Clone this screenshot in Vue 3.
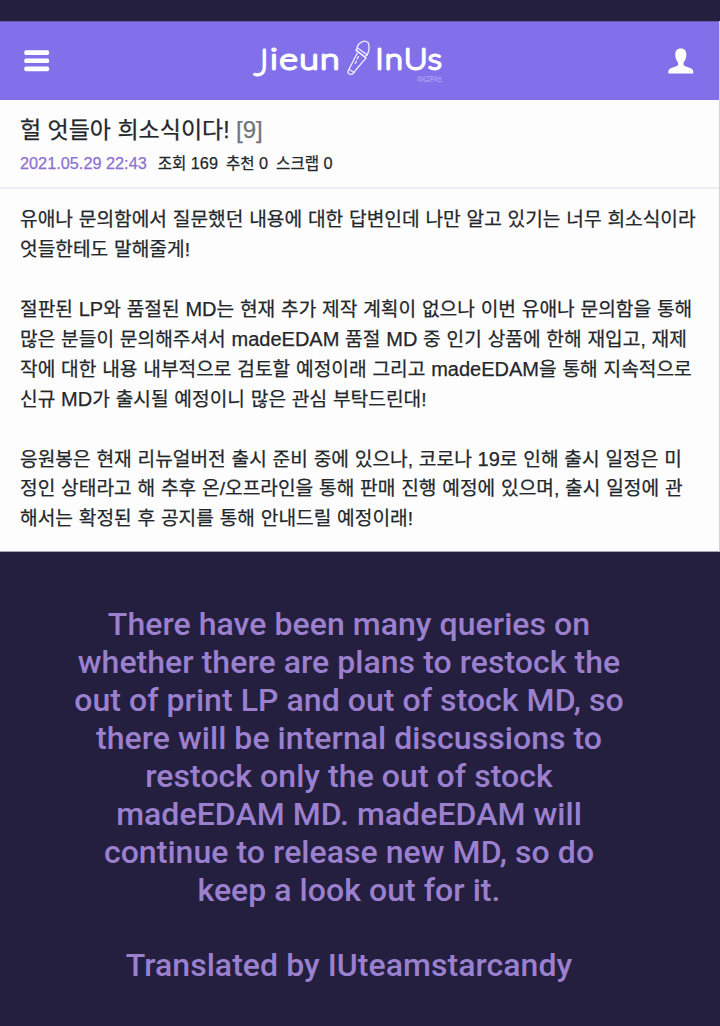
<template>
  <div class="page">
    <section class="post">
      <header class="topbar">
        <button class="icon-btn" aria-label="menu">
          <svg width="26" height="22" viewBox="0 0 26 22">
            <rect x="0.3" y="0.3" width="24.8" height="4.6" rx="1.6" />
            <rect x="0.3" y="8.4" width="24.8" height="4.6" rx="1.6" />
            <rect x="0.3" y="16.6" width="24.8" height="4.6" rx="1.6" />
          </svg>
        </button>
        <svg class="logo" width="200" height="50" viewBox="0 0 200 50">
          <text class="word initial" x="6" y="39">J</text>
          <text class="word" x="22.3" y="33" textLength="71" lengthAdjust="spacingAndGlyphs">ieun</text>
          <g class="mic">
            <path d="M109.2 17.2L100.2 34.7Q99.4 37 101.3 38Q103.7 39.2 105.2 37.2L117.8 22.2" />
            <path d="M108.5 14.5Q109.5 6.5 116 5.2Q121.7 5.1 121 11.5Q121.2 18 116.7 20.7Z" />
            <path d="M107.7 14.1L118 22.1M109.9 12.3L119.4 19M101.7 33.8L106.3 36.8" />
            <path d="M110.5 20.5L109.3 22.7M108.4 25.2L107.3 27.3" />
          </g>
          <text class="word" x="127.5" y="33" textLength="68" lengthAdjust="spacingAndGlyphs">InUs</text>
          <text class="sub" x="169" y="44.5" textLength="25" lengthAdjust="spacingAndGlyphs">이지금은어스</text>
        </svg>
        <button class="icon-btn" aria-label="profile">
          <svg width="26" height="26" viewBox="0 0 26 26">
            <path d="M12.8 0.5C16.7 0.5 18.6 3.1 18.3 7.2C18.1 10.2 17.2 12.6 15.6 14.2V17C16.5 19.2 24.8 19.2 25.2 23V25.5H0.4V23C0.8 19.2 9.1 19.2 10 17V14.2C8.4 12.6 7.5 10.2 7.3 7.2C7 3.1 8.9 0.5 12.8 0.5Z" />
          </svg>
        </button>
      </header>

      <div class="post-head">
        <h1>헐 엇들아 희소식이다! <span class="count">[9]</span></h1>
        <div class="meta">
          <span class="date">2021.05.29 22:43</span>
          <span v-for="item in stats" :key="item.label">{{ item.label }} <b>{{ item.value }}</b></span>
        </div>
      </div>

      <div class="post-body">
        <p v-for="(lines, i) in paragraphs" :key="i">
          <span v-for="(line, j) in lines" :key="j" class="line">
            <span v-for="(part, k) in splitLatin(line)" :key="k" :class="{ latin: k % 2 === 1 }">{{ part }}</span>
          </span>
        </p>
      </div>
    </section>

    <section class="translation">
      <p>
        <span v-for="line in translation" :key="line" class="line">{{ line }}</span>
      </p>
      <p>Translated by IUteamstarcandy</p>
    </section>
  </div>
</template>

<script setup>
const stats = [
  { label: '조회', value: 169 },
  { label: '추천', value: 0 },
  { label: '스크랩', value: 0 }
]

const paragraphs = [
  [
    '유애나 문의함에서 질문했던 내용에 대한 답변인데 나만 알고 있기는 너무 희소식이라',
    '엇들한테도 말해줄게!'
  ],
  [
    '절판된 LP와 품절된 MD는 현재 추가 제작 계획이 없으나 이번 유애나 문의함을 통해',
    '많은 분들이 문의해주셔서 madeEDAM 품절 MD 중 인기 상품에 한해 재입고, 재제',
    '작에 대한 내용 내부적으로 검토할 예정이래 그리고 madeEDAM을 통해 지속적으로',
    '신규 MD가 출시될 예정이니 많은 관심 부탁드린대!'
  ],
  [
    '응원봉은 현재 리뉴얼버전 출시 준비 중에 있으나, 코로나 19로 인해 출시 일정은 미',
    '정인 상태라고 해 추후 온/오프라인을 통해 판매 진행 예정에 있으며, 출시 일정에 관',
    '해서는 확정된 후 공지를 통해 안내드릴 예정이래!'
  ]
]

const translation = [
  'There have been many queries on',
  'whether there are plans to restock the',
  'out of print LP and out of stock MD, so',
  'there will be internal discussions to',
  'restock only the out of stock',
  'madeEDAM MD. madeEDAM will',
  'continue to release new MD, so do',
  'keep a look out for it.'
]

// odd entries are the latin / digit runs
const splitLatin = (line) => line.split(/([A-Za-z0-9]+)/)
</script>

<style>
body {
  margin: 0;
  background: #241e3f;
}
</style>

<style scoped>
.page {
  box-sizing: border-box;
  height: 1026px;
  padding-top: 21px;
  overflow: hidden;
  background: #241e3f;
  font-family: "Liberation Sans", "Noto Sans CJK KR", sans-serif;
}

.post {
  box-sizing: border-box;
  height: 531px;
  border-right: 1px solid #d3d2df;
  border-bottom: 1px solid #a5a3b5;
  background: #fdfdfe;
  color: #23272a;
  -webkit-text-stroke: 0.25px currentColor;
}

.topbar {
  box-sizing: border-box;
  display: flex;
  align-items: center;
  justify-content: space-between;
  height: 79px;
  padding: 0 25px 0 24px;
  border-top: 1px solid #625aae;
  background: #8270eb;
}

.icon-btn {
  display: flex;
  padding: 0;
  border: none;
  background: none;
  fill: #fff;
}

.logo {
  margin-left: -22px;
  -webkit-text-stroke: 0;
}

.word {
  font-family: Lato, sans-serif;
  font-size: 28px;
  font-weight: 100;
  letter-spacing: 1.5px;
  fill: #fff;
  stroke: #fff;
  stroke-width: 2.8;
  stroke-linecap: round;
  stroke-linejoin: round;
}

.initial {
  font-size: 35px;
  letter-spacing: 0;
}

.sub {
  font-size: 5.5px;
  fill: #c9c0f8;
}

.mic {
  fill: none;
  stroke: #f3f0ff;
  stroke-width: 1.3;
  stroke-linecap: round;
  stroke-linejoin: round;
}

.post-head {
  box-sizing: border-box;
  height: 89px;
  padding: 13px 20px 0;
  border-bottom: 2px solid #eeedf1;
}

h1 {
  margin: 0;
  font-size: 23px;
  font-weight: 400;
  line-height: 34px;
  white-space: nowrap;
}

.count {
  color: #707579;
  font-size: 24px;
}

.meta {
  display: flex;
  align-items: baseline;
  gap: 8px;
  font-size: 15.6px;
  line-height: 32px;
}

.meta b {
  font-size: 16.3px;
  font-weight: 400;
}

.meta .date {
  margin-right: 3px;
  color: #8c70cf;
  font-size: 16.3px;
}

.post-body {
  padding: 15.6px 20px 0;
  font-size: 19.2px;
  line-height: 30px;
  word-spacing: 0.45px;
}

.post-body p {
  margin: 0 0 29.9px;
}

.line {
  display: block;
  height: 30px;
  white-space: nowrap;
}

.latin {
  font-size: 20px;
}

.translation {
  padding: 54.4px 22px 0 0;
  color: #9b80ce;
  font-family: Roboto, sans-serif;
  font-size: 32px;
  font-weight: 500;
  line-height: 37.9px;
  letter-spacing: 0.05px;
  text-align: center;
}

.translation p {
  margin: 0 0 37.9px;
}

.translation .line {
  height: 37.9px;
}
</style>
